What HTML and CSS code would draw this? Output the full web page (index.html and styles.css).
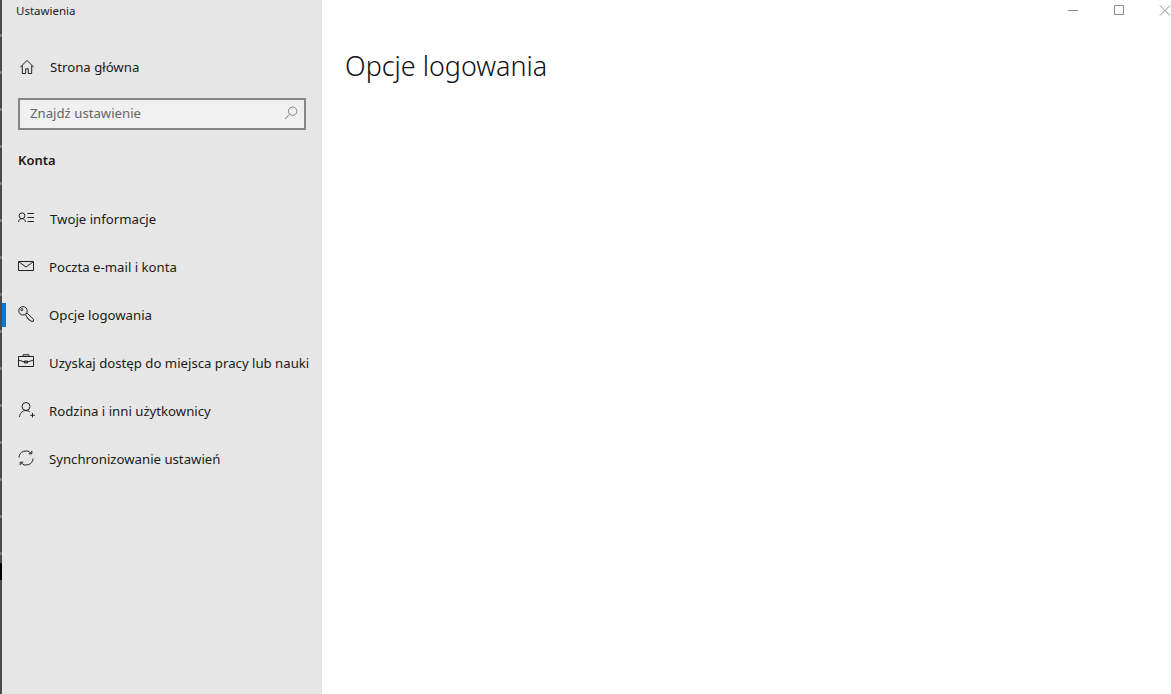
FILE: index.html
```html
<!DOCTYPE html>
<html lang="pl">
<head>
<meta charset="utf-8">
<title>Ustawienia</title>
<link rel="stylesheet" href="styles.css">
</head>
<body>
<div class="app">
  <div class="edge"></div>
  <aside class="sidebar">
    <div class="app-title">Ustawienia</div>
    <a class="home-row">
      <svg class="icon" viewBox="0 0 16 16"><path d="M1.300 8.200 8 1.400l6.700 6.800M3.300 6.500v8h3.400V9.800h2.600v4.700h3.400v-8"/></svg>
      <span class="home-label">Strona główna</span>
    </a>
    <div class="search">
      <span class="search-text">Znajdź ustawienie</span>
      <svg class="search-icon" viewBox="0 0 14 14"><circle cx="8.600" cy="5.200" r="4.200"/><path d="M5.600 8.200 1 13"/></svg>
    </div>
    <div class="section">Konta</div>
    <nav class="nav">
      <a class="nav-item">
        <svg class="icon" viewBox="0 0 16 16"><circle cx="4" cy="4.800" r="2.900"/><path d="M.5 11c.3-2.300 1.700-3.400 3.500-3.400S7.200 8.700 7.500 11M9.500 2.500H16M9.500 6.500H16M9.500 10.500H16"/></svg>
        <span class="label label-first">Twoje informacje</span>
      </a>
      <a class="nav-item">
        <svg class="icon" viewBox="0 0 16 16"><path d="M.5 2.500h15v9H.5zM.8 2.800 8 8l7.200-5.200"/></svg>
        <span class="label">Poczta e-mail i konta</span>
      </a>
      <a class="nav-item active">
        <svg class="icon icon-t" viewBox="0 0 16 16"><circle cx="5" cy="4.800" r="4.200"/><circle cx="3.800" cy="3.600" r="1"/><path d="m8 8 1.200-.8 6.300 6.100v2h-2.600l-.8-1.300h-1.300l-.3-1.400-1.400-.3V11L7.300 8.600"/></svg>
        <span class="label">Opcje logowania</span>
      </a>
      <a class="nav-item">
        <svg class="icon icon-t" viewBox="0 0 16 16"><path d="M.5 2.500h15v10H.5zM5 2.500V.8h6v1.700M.5 6 6.500 8h3l6-2M6.500 7h3v2h-3z"/></svg>
        <span class="label">Uzyskaj dostęp do miejsca pracy lub nauki</span>
      </a>
      <a class="nav-item">
        <svg class="icon icon-t icon-r" viewBox="0 0 16 16"><circle cx="7" cy="4.500" r="4"/><path d="M.5 15c.3-3.700 3-6.500 6.500-6.500 1.500 0 2.800.5 3.800 1.400M13.500 11v4.500M11.300 13.300h4.500"/></svg>
        <span class="label label-r">Rodzina i inni użytkownicy</span>
      </a>
      <a class="nav-item">
        <svg class="icon icon-t" viewBox="0 0 16 16"><path d="M1 7.500A7 7 0 0 1 13.300 3.300M13.800.8v3h-3M15 8.500A7 7 0 0 1 2.700 12.700M2.200 15.200v-3h3"/></svg>
        <span class="label">Synchronizowanie ustawień</span>
      </a>
    </nav>
  </aside>
  <main class="main">
    <div class="window-controls">
      <svg class="win-btn" viewBox="0 0 46 20"><path d="M18 10.500h10"/></svg>
      <svg class="win-btn" viewBox="0 0 46 20"><path d="M18.500 5.500h9v9h-9z"/></svg>
      <svg class="win-btn" viewBox="0 0 46 20"><path d="m18 5.500 10 10M28 5.500l-10 10"/></svg>
    </div>
    <h1 class="page-title">Opcje logowania</h1>
  </main>
</div>
</body>
</html>
```
FILE: styles.css
```css
* { box-sizing: border-box; }
html, body { margin: 0; height: 100%; overflow: hidden; }
body { background: #fff; color: #1a1a1a; font-family: "Noto Sans", "Open Sans", sans-serif; }
.app { display: flex; height: 694px; overflow: hidden; }
.edge {
  width: 2px;
  flex: none;
  background:
    linear-gradient(transparent 563px, #000 563px 580px, #4a4a4a 580px),
    repeating-linear-gradient(#4a4a4a 0 34px, #777 34px 37px);
}
.sidebar { width: 320px; flex: none; background: #e6e6e6; display: flex; flex-direction: column; }
.app-title { font-size: 11.5px; line-height: 16px; padding: 3px 0 0 14px; color: #222; }
.home-row { display: flex; align-items: center; height: 48px; margin-top: 24px; padding-left: 17px; }
.home-label { margin-left: 15px; font-size: 13.2px; }
.icon { width: 16px; height: 16px; flex: none; fill: none; stroke: #222; stroke-width: 1; }
.icon-t { transform: translateY(-1px); }
.icon-r { margin-left: 1px; }
.search { display: flex; align-items: center; justify-content: space-between; height: 32px; margin: 7px 16px 0; padding: 0 6px 2px 10px; background: #f0f0f0; border: 2px solid #858585; }
.search-text { font-size: 13.2px; color: #666; }
.search-icon { width: 14px; height: 14px; fill: none; stroke: #888; stroke-width: 1; }
.section { font-size: 13px; font-weight: 600; line-height: 18px; padding: 21px 0 0 16px; color: #1a1a1a; }
.nav { display: flex; flex-direction: column; margin-top: 26px; }
.nav-item { position: relative; display: flex; align-items: center; height: 48px; padding-left: 16px; }
.label { margin-left: 15px; font-size: 13.2px; white-space: nowrap; }
.label-first { margin-left: 16px; }
.label-r { margin-left: 14px; }
.active::before { content: ""; position: absolute; left: 0; top: 12px; width: 4px; height: 24px; background: #0078d7; }
.main { flex: 1; min-width: 0; display: flex; flex-direction: column; }
.window-controls { display: flex; justify-content: flex-end; height: 32px; margin-right: -17px; }
.win-btn { width: 46px; height: 20px; flex: none; fill: none; stroke: #8a8a8a; stroke-width: 1; }
.page-title { margin: 15px 0 0 23px; font-size: 26.9px; font-weight: 300; line-height: 38px; color: #111; }
```
